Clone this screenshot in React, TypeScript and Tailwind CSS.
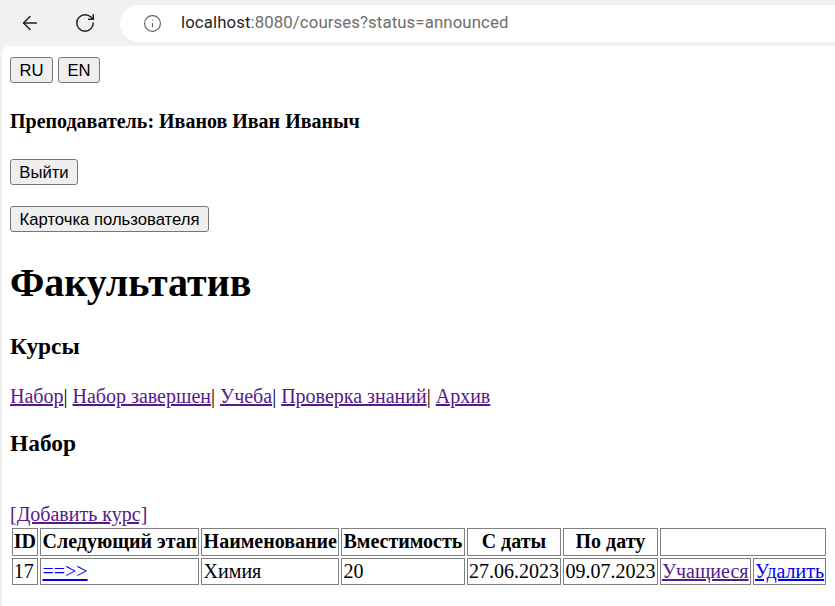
import { ArrowLeft, RotateCw, Info } from "lucide-react"
import type { ReactNode } from "react"

function NativeButton({ children, width }: { children: ReactNode; width: string }) {
  return (
    <button
      className={
        "h-[26px] flex items-center justify-center bg-[#efefef] border border-[#767676] rounded-[3px] text-[16.67px] leading-[19px] font-['Liberation_Sans',Arial,sans-serif] text-black " +
        width
      }
    >
      {children}
    </button>
  )
}

const visited = "text-[#551a8b] underline"
const unvisited = "text-[#0000ee] underline"
const cell = "border border-[#808080] p-[1.25px] align-middle"

export default function App() {
  return (
    <div className="w-[835px] h-[606px] overflow-hidden bg-[#f1f1f1] flex flex-col">
      {/* browser chrome */}
      <div className="h-[46px] shrink-0 flex items-center">
        <ArrowLeft className="ml-[19px] w-[22px] h-[22px] text-[#1f1f1f]" strokeWidth={1.6} />
        <RotateCw className="ml-[33px] w-[22px] h-[22px] text-[#1f1f1f]" strokeWidth={1.6} />
        <div className="ml-[24px] h-[37px] flex-1 bg-white rounded-l-full flex items-center">
          <Info className="ml-[23px] w-[19px] h-[19px] text-[#5f5f5f]" strokeWidth={1.4} />
          <span className="ml-[19px] text-[16.8px] font-['Roboto',sans-serif] tracking-[0.1px]">
            <span className="text-[#1f1f1f]">localhost</span>
            <span className="text-[#6e6e6e]">:8080/courses?status=announced</span>
          </span>
        </div>
      </div>

      {/* page */}
      <div className="flex-1 ml-[2px] bg-white rounded-tl-[8px] pl-[8px] pt-[11px] flex flex-col items-start font-['Liberation_Serif','Times_New_Roman',serif] text-black">
        <div className="flex gap-[5px]">
          <NativeButton width="w-[43px]">RU</NativeButton>
          <NativeButton width="w-[42px]">EN</NativeButton>
        </div>

        <h4 className="mt-[27px] text-[20px] leading-[23px] font-bold">Преподаватель: Иванов Иван Иваныч</h4>

        <div className="mt-[26px]">
          <NativeButton width="w-[68px]">Выйти</NativeButton>
        </div>
        <div className="mt-[21px]">
          <NativeButton width="w-[199px]">Карточка пользователя</NativeButton>
        </div>

        <h1 className="mt-[28px] text-[40px] leading-[46px] font-bold">Факультатив</h1>

        <h3 className="mt-[27px] text-[23.4px] leading-[27px] font-bold">Курсы</h3>

        <div className="mt-[25px] text-[20px] leading-[23px]">
          <a className={visited}>Набор</a>|{" "}
          <a className={visited}>Набор завершен</a>|{" "}
          <a className={visited}>Учеба</a>|{" "}
          <a className={visited}>Проверка знаний</a>|{" "}
          <a className={visited}>Архив</a>
        </div>

        <h3 className="mt-[22px] text-[23.4px] leading-[27px] font-bold">Набор</h3>

        <div className="mt-[46px] text-[20px] leading-[23px]">
          <a className={visited}>[Добавить курс]</a>
        </div>

        <table className="border-separate border-spacing-[2.5px] text-[20px] leading-[23px] -ml-[0.5px]">
          <thead>
            <tr>
              <th className={cell + " font-bold text-center"}>ID</th>
              <th className={cell + " font-bold text-center"}>Следующий этап</th>
              <th className={cell + " font-bold text-center"}>Наименование</th>
              <th className={cell + " font-bold text-center"}>Вместимость</th>
              <th className={cell + " font-bold text-center"}>С даты</th>
              <th className={cell + " font-bold text-center"}>По дату</th>
              <th className={cell} colSpan={2}></th>
            </tr>
          </thead>
          <tbody>
            <tr>
              <td className={cell}>17</td>
              <td className={cell}>
                <a className={unvisited}>==&gt;&gt;</a>
              </td>
              <td className={cell}>Химия</td>
              <td className={cell}>20</td>
              <td className={cell}>27.06.2023</td>
              <td className={cell}>09.07.2023</td>
              <td className={cell}>
                <a className={visited}>Учащиеся</a>
              </td>
              <td className={cell}>
                <a className={unvisited}>Удалить</a>
              </td>
            </tr>
          </tbody>
        </table>
      </div>
    </div>
  )
}
